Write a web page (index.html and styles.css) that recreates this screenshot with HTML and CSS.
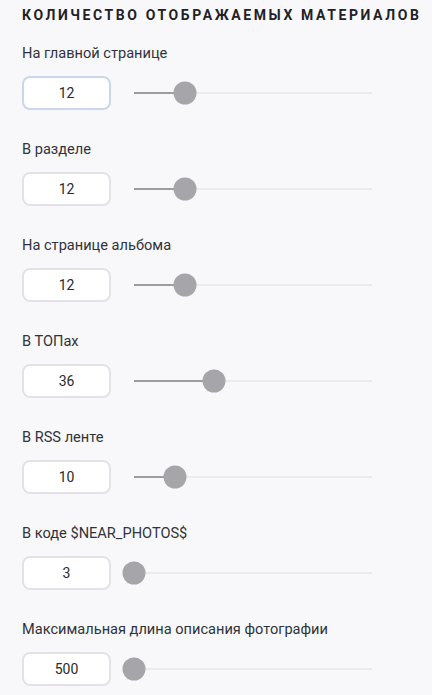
FILE: index.html
```html
<!DOCTYPE html>
<html lang="ru">
<head>
<meta charset="utf-8">
<link rel="stylesheet" href="styles.css">
</head>
<body>
<div class="panel">
  <h2 class="title">Количество отображаемых материалов</h2>
  <div class="field">
    <div class="label">На главной странице</div>
    <div class="control">
      <div class="num num-focus">12</div>
      <div class="slider"><div class="fill" style="width:21.4%"></div><div class="thumb" style="left:21.4%"></div></div>
    </div>
  </div>
  <div class="field">
    <div class="label">В разделе</div>
    <div class="control">
      <div class="num">12</div>
      <div class="slider"><div class="fill" style="width:21.4%"></div><div class="thumb" style="left:21.4%"></div></div>
    </div>
  </div>
  <div class="field">
    <div class="label">На странице альбома</div>
    <div class="control">
      <div class="num">12</div>
      <div class="slider"><div class="fill" style="width:21.4%"></div><div class="thumb" style="left:21.4%"></div></div>
    </div>
  </div>
  <div class="field">
    <div class="label">В ТОПах</div>
    <div class="control">
      <div class="num">36</div>
      <div class="slider"><div class="fill" style="width:33.6%"></div><div class="thumb" style="left:33.6%"></div></div>
    </div>
  </div>
  <div class="field">
    <div class="label">В RSS ленте</div>
    <div class="control">
      <div class="num">10</div>
      <div class="slider"><div class="fill" style="width:17.2%"></div><div class="thumb" style="left:17.2%"></div></div>
    </div>
  </div>
  <div class="field">
    <div class="label">В коде $NEAR_PHOTOS$</div>
    <div class="control">
      <div class="num">3</div>
      <div class="slider"><div class="fill" style="width:0%"></div><div class="thumb" style="left:0%"></div></div>
    </div>
  </div>
  <div class="field">
    <div class="label">Максимальная длина описания фотографии</div>
    <div class="control">
      <div class="num">500</div>
      <div class="slider"><div class="fill" style="width:0%"></div><div class="thumb" style="left:0%"></div></div>
    </div>
  </div>
</div>
</body>
</html>
```

FILE: styles.css
```css
html, body {
  margin: 0;
  padding: 0;
  background: #f8f8fb;
}
body {
  font-family: Roboto, "Noto Sans", sans-serif;
  color: #30333a;
}
.panel {
  padding: 5px 0 0 22px;
  display: flex;
  flex-direction: column;
}
.title {
  margin: 0;
  font-size: 14px;
  line-height: 20px;
  font-weight: 700;
  text-transform: uppercase;
  letter-spacing: 2.6px;
  color: #222226;
}
.field {
  display: flex;
  flex-direction: column;
  gap: 13px;
  margin-top: 18px;
}
.field + .field {
  margin-top: 29px;
}
.label {
  font-size: 14.6px;
  line-height: 20px;
  color: #30333a;
}
.control {
  display: flex;
  align-items: center;
  gap: 23px;
}
.num {
  box-sizing: border-box;
  width: 89px;
  height: 34px;
  border: 2px solid #e3e3e7;
  border-radius: 8px;
  background: #fff;
  display: flex;
  align-items: center;
  justify-content: center;
  font-size: 14px;
  color: #2a2a2e;
}
.num-focus {
  border-color: #c8d7eb;
}
.slider {
  position: relative;
  width: 238px;
  height: 2px;
  background: #ebebef;
}
.fill {
  height: 2px;
  background: #9d9da1;
}
.thumb {
  position: absolute;
  top: 1px;
  width: 23px;
  height: 23px;
  border-radius: 50%;
  background: #a6a6aa;
  transform: translate(-50%, -50%);
}
```
